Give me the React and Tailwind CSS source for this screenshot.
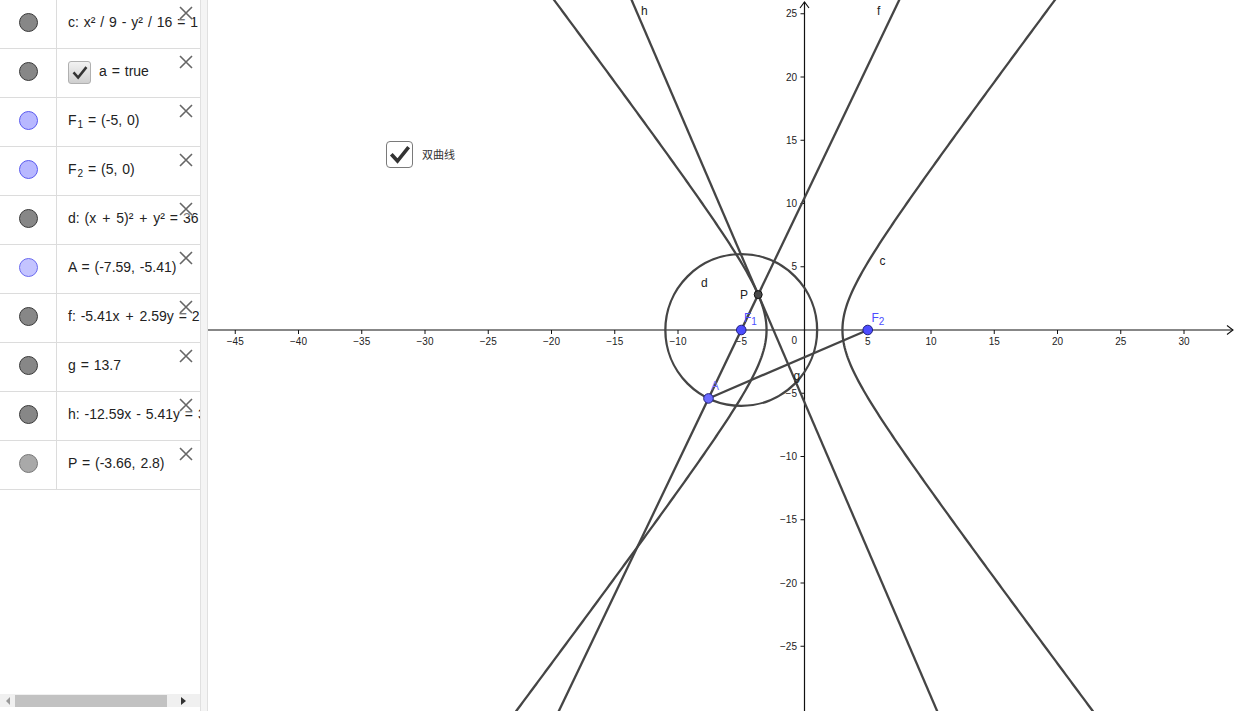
import React from "react";

const S = 12.65, OX = 804.5, OY = 330;
const px = (x) => OX + x * S;
const py = (y) => OY - y * S;

function hyperPath(sign) {
  const pts = [];
  for (let y = -32; y <= 28.001; y += 0.2) {
    const x = sign * 3 * Math.sqrt(1 + (y * y) / 16);
    pts.push(`${px(x).toFixed(2)},${py(y).toFixed(2)}`);
  }
  return "M" + pts.join(" L");
}

const A = [-7.59, -5.41];
const P = [-3.66, 2.8];
const fx = (y) => (y * 2.59) / 5.41 - 5;
const hx = (y) => -(30.94 + 5.41 * y) / 12.59;

const Check = ({ size = 16, w = 3 }) => (
  <svg width={size} height={size} viewBox="0 0 24 24">
    <path d="M4.5 12.5 L9.5 18 L19.5 5.5" fill="none" stroke="#333" strokeWidth={w} strokeLinecap="square" />
  </svg>
);

const XIcon = () => (
  <svg width="14" height="14" viewBox="0 0 14 14">
    <path d="M1 1 L13 13 M13 1 L1 13" stroke="#666" strokeWidth="1.6" />
  </svg>
);

const dotStyle = {
  gray: "bg-[#878787] border-[#3a3a3a]",
  blue: "bg-[#b8b8ff] border-[#5a5af0]",
  blueDot: "bg-[#c4c4ff] border-[#6a6af0]",
  light: "bg-[#a9a9a9] border-[#787878]",
};

const Sub = ({ children }) => <span className="text-[10px] relative top-[3px] ml-[1px]">{children}</span>;
const Pl = () => <span className="mx-[1px]">+</span>;

const rows = [
  { c: "gray", t: <>c: x² / 9 - y² / 16 = 1</> },
  { c: "gray", check: true, t: <>a = true</> },
  { c: "blue", t: <>F<Sub>1</Sub> = (-5, 0)</> },
  { c: "blue", t: <>F<Sub>2</Sub> = (5, 0)</> },
  { c: "gray", t: <>d: (x <Pl /> 5)² <Pl /> y² = 36</> },
  { c: "blueDot", t: <>A = (-7.59, -5.41)</> },
  { c: "gray", t: <>f: -5.41x <Pl /> 2.59y = 27.05</> },
  { c: "gray", t: <>g = 13.7</> },
  { c: "gray", t: <>h: -12.59x - 5.41y = 30.94</> },
  { c: "light", t: <>P = (-3.66, 2.8)</> },
];

function AlgebraRow({ r }) {
  return (
    <div className="relative flex h-[49px] border-b border-[#dcdcdc]">
      <div className="w-[57px] shrink-0 border-r border-[#dcdcdc] flex items-center justify-center pb-[4px]">
        <div className={`w-[19px] h-[19px] rounded-full border ${dotStyle[r.c]}`} />
      </div>
      <div className="flex-1 min-w-0 overflow-hidden whitespace-nowrap flex items-center pl-[11px] pb-[4px] text-[14px] text-[#222] [word-spacing:1px]">
        {r.check && (
          <div className="w-[23px] h-[23px] mr-[8px] mt-[3px] shrink-0 rounded-[3px] border border-[#b0b0b0] bg-gradient-to-b from-[#f2f2f2] to-[#cfcfcf] flex items-center justify-center">
            <Check size={18} w={3.4} />
          </div>
        )}
        <span>{r.t}</span>
      </div>
      <div className="absolute right-[7px] top-[6px] bg-white/40">
        <XIcon />
      </div>
    </div>
  );
}

export default function App() {
  const xTicks = [-45, -40, -35, -30, -25, -20, -15, -10, -5, 5, 10, 15, 20, 25, 30];
  const yTicks = [25, 20, 15, 10, 5, -5, -10, -15, -20, -25];
  const lab = { fontFamily: "'Liberation Sans', Arial, sans-serif" };
  const blue = "#4d4dff";
  const stroke = "#454545";
  return (
    <div className="flex w-[1235px] h-[711px] bg-white overflow-hidden font-['Liberation_Sans',Arial,sans-serif]">
      <div className="w-[200px] shrink-0 h-full flex flex-col overflow-hidden">
        {rows.map((r, i) => (
          <AlgebraRow key={i} r={r} />
        ))}
        <div className="flex-1" />
        <div className="h-[13px] mb-[4px] bg-[#f0f0f0] flex items-center">
          <div className="w-[15px] flex justify-center">
            <div className="w-0 h-0 border-y-[4px] border-y-transparent border-r-[4px] border-r-[#999]" />
          </div>
          <div className="w-[152px] h-[12px] bg-[#c2c2c2]" />
          <div className="flex-1 flex justify-center">
            <div className="w-0 h-0 border-y-[4px] border-y-transparent border-l-[5px] border-l-[#333]" />
          </div>
        </div>
      </div>
      <div className="w-[8px] shrink-0 h-full bg-[#f4f4f4] border-l border-r border-[#e0e0e0]" />
      <div className="flex-1 relative h-full overflow-hidden">
        <svg className="block" width="1027" height="711" viewBox="208 0 1027 711" style={lab}>
          <line x1="208" y1={OY} x2="1233" y2={OY} stroke="#111" strokeWidth="1.2" />
          <path d={`M1227 ${OY - 4.5} L1233 ${OY} L1227 ${OY + 4.5}`} fill="none" stroke="#111" strokeWidth="1.1" />
          <line x1={OX} y1="711" x2={OX} y2="2" stroke="#111" strokeWidth="1.2" />
          <path d={`M${OX - 4.5} 8 L${OX} 2 L${OX + 4.5} 8`} fill="none" stroke="#111" strokeWidth="1.1" />
          {xTicks.map((t) => (
            <g key={"x" + t}>
              <line x1={px(t)} y1={OY} x2={px(t)} y2={OY + 4} stroke="#111" strokeWidth="1" />
              <text x={px(t)} y={OY + 14.5} fontSize="10" textAnchor="middle" fill="#222">
                {t < 0 ? "\u2212" + -t : t}
              </text>
            </g>
          ))}
          {yTicks.map((t) => (
            <g key={"y" + t}>
              <line x1={OX - 4} y1={py(t)} x2={OX} y2={py(t)} stroke="#111" strokeWidth="1" />
              <text x={OX - 7.5} y={py(t) + 3.5} fontSize="10" textAnchor="end" fill="#222">
                {t < 0 ? "\u2212" + -t : t}
              </text>
            </g>
          ))}
          <text x={OX - 7.5} y={OY + 14} fontSize="10" textAnchor="end" fill="#222">0</text>

          <path d={hyperPath(1)} fill="none" stroke={stroke} strokeWidth="2.3" />
          <path d={hyperPath(-1)} fill="none" stroke={stroke} strokeWidth="2.3" />
          <circle cx={px(-5)} cy={py(0)} r={6 * S} fill="none" stroke={stroke} strokeWidth="2.3" />
          <line x1={px(fx(-35))} y1={py(-35)} x2={px(fx(30))} y2={py(30)} stroke={stroke} strokeWidth="2.3" />
          <line x1={px(hx(-35))} y1={py(-35)} x2={px(hx(30))} y2={py(30)} stroke={stroke} strokeWidth="2.3" />
          <line x1={px(A[0])} y1={py(A[1])} x2={px(5)} y2={py(0)} stroke={stroke} strokeWidth="2.3" />

          <circle cx={px(-5)} cy={py(0)} r="4.8" fill={blue} stroke="#202080" strokeWidth="1" />
          <circle cx={px(5)} cy={py(0)} r="4.8" fill={blue} stroke="#202080" strokeWidth="1" />
          <circle cx={px(A[0])} cy={py(A[1])} r="4.8" fill="#6b6bff" stroke="#202080" strokeWidth="1" />
          <circle cx={px(P[0])} cy={py(P[1])} r="4" fill="#4a4a4a" stroke="#111" strokeWidth="1" />

          <text x="641" y="15" fontSize="12" fill="#222">h</text>
          <text x="877" y="15" fontSize="12" fill="#222">f</text>
          <text x="879.5" y="264.5" fontSize="12" fill="#222">c</text>
          <text x="701" y="287" fontSize="12" fill="#222">d</text>
          <text x="740" y="298.5" fontSize="12" fill="#222">P</text>
          <text x="793.5" y="380" fontSize="12" fill="#222">g</text>
          <text x="744" y="322" fontSize="12" fill={blue}>
            F<tspan fontSize="10" dy="3">1</tspan>
          </text>
          <text x="871.5" y="322" fontSize="12" fill={blue}>
            F<tspan fontSize="10" dy="3">2</tspan>
          </text>
          <text x="711" y="390" fontSize="12" fill="#7070ff">A</text>
        </svg>

        <div className="absolute left-[178px] top-[141px] flex items-center">
          <div className="w-[27px] h-[27px] rounded-[4px] border-[1.5px] border-[#7a7a7a] bg-white flex items-center justify-center">
            <Check size={24} w={3.6} />
          </div>
          <span className="ml-[9px] text-[11px] text-[#333] font-['Noto_Sans_CJK_SC',sans-serif]">双曲线</span>
        </div>
      </div>
    </div>
  );
}
